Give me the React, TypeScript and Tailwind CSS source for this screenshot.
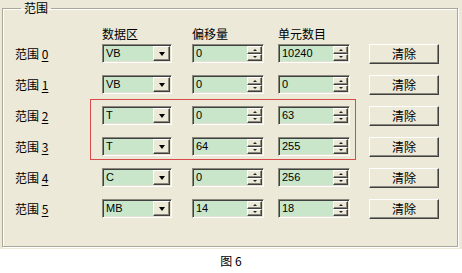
import React from 'react';

interface RangeRow {
  n: string;
  area: string;
  offset: string;
  count: string;
}

const rows: RangeRow[] = [
  { n: '0', area: 'VB', offset: '0', count: '10240' },
  { n: '1', area: 'VB', offset: '0', count: '0' },
  { n: '2', area: 'T', offset: '0', count: '63' },
  { n: '3', area: 'T', offset: '64', count: '255' },
  { n: '4', area: 'C', offset: '0', count: '256' },
  { n: '5', area: 'MB', offset: '14', count: '18' },
];

const cjk = "font-['SimSun','Noto_Sans_CJK_SC',sans-serif]";
const latin = "font-['Liberation_Sans','Noto_Sans_CJK_SC',sans-serif]";

// sunken edit frame, classic windows look
const sunken =
  'border border-t-[#8a877c] border-l-[#8a877c] border-b-white border-r-white shadow-[inset_1px_1px_0_#404040,inset_-1px_-1px_0_#e4e1d2]';
const raised =
  'border border-t-white border-l-white border-b-[#404040] border-r-[#404040] shadow-[inset_-1px_-1px_0_#8a877c] bg-[#ece9d8]';

function ComboBox({ value }: { value: string }) {
  return (
    <div className={`flex h-[19px] w-[70px] bg-[#c9e6cb] p-[1px] ${sunken}`}>
      <div className={`flex-1 pl-[2px] text-[11px] leading-[15px] text-black ${latin}`}>{value}</div>
      <div className={`flex w-[17px] items-center justify-center ${raised}`}>
        <div className="h-0 w-0 border-x-[3.5px] border-t-[4px] border-x-transparent border-t-black" />
      </div>
    </div>
  );
}

function SpinBox({ value }: { value: string }) {
  return (
    <div className={`flex h-[19px] w-[72px] bg-[#c9e6cb] p-[1px] ${sunken}`}>
      <div className={`flex-1 pl-[2px] text-[11px] leading-[15px] text-black ${latin}`}>{value}</div>
      <div className="flex w-[15px] flex-col">
        <div className={`flex flex-1 items-center justify-center ${raised}`}>
          <div className="h-0 w-0 border-x-[2px] border-b-[2px] border-x-transparent border-b-[#222]" />
        </div>
        <div className={`flex flex-1 items-center justify-center ${raised}`}>
          <div className="h-0 w-0 border-x-[2px] border-t-[2px] border-x-transparent border-t-[#222]" />
        </div>
      </div>
    </div>
  );
}

function Row({ row }: { row: RangeRow }) {
  return (
    <div className="flex h-[31px] items-center">
      <div className={`w-[87px] text-[12px] leading-[14px] ${cjk}`}>
        范围 <span className="underline underline-offset-2">{row.n}</span>
      </div>
      <ComboBox value={row.area} />
      <div className="ml-[20px]">
        <SpinBox value={row.offset} />
      </div>
      <div className="ml-[14px]">
        <SpinBox value={row.count} />
      </div>
      <button
        className={`ml-[19px] h-[20px] w-[70px] text-[12px] leading-[14px] text-black ${cjk} ${raised}`}
      >
        清除
      </button>
    </div>
  );
}

export default function App() {
  return (
    <div className="h-[273px] w-[462px] bg-white text-black">
      <div className="h-[249px] bg-[#ece9d8]">
        <fieldset className="ml-[2px] h-[247px] w-[456px] border border-[#aca899] shadow-[inset_1px_1px_0_#fff,1px_1px_0_#fff] pl-[12px]">
          <legend className={`ml-[6px] whitespace-nowrap px-[3px] text-[12px] leading-[16px] ${cjk}`}>范围</legend>
          <div className={`-mb-[3px] flex pt-[11px] text-[12px] leading-[14px] ${cjk}`}>
            <div className="w-[87px]" />
            <div className="w-[90px]">数据区</div>
            <div className="w-[86px]">偏移量</div>
            <div>单元数目</div>
          </div>
          <Row row={rows[0]} />
          <Row row={rows[1]} />
          <div className="relative">
            <Row row={rows[2]} />
            <Row row={rows[3]} />
            {/* highlight box drawn over rows 2-3 */}
            <div className="pointer-events-none absolute left-[75px] top-[-1px] h-[61px] w-[266px] border border-[#d94a4a]" />
          </div>
          <Row row={rows[4]} />
          <Row row={rows[5]} />
        </fieldset>
      </div>
      <div className={`pt-[5px] text-center text-[12px] leading-[14px] ${cjk}`}>图 6</div>
    </div>
  );
}
